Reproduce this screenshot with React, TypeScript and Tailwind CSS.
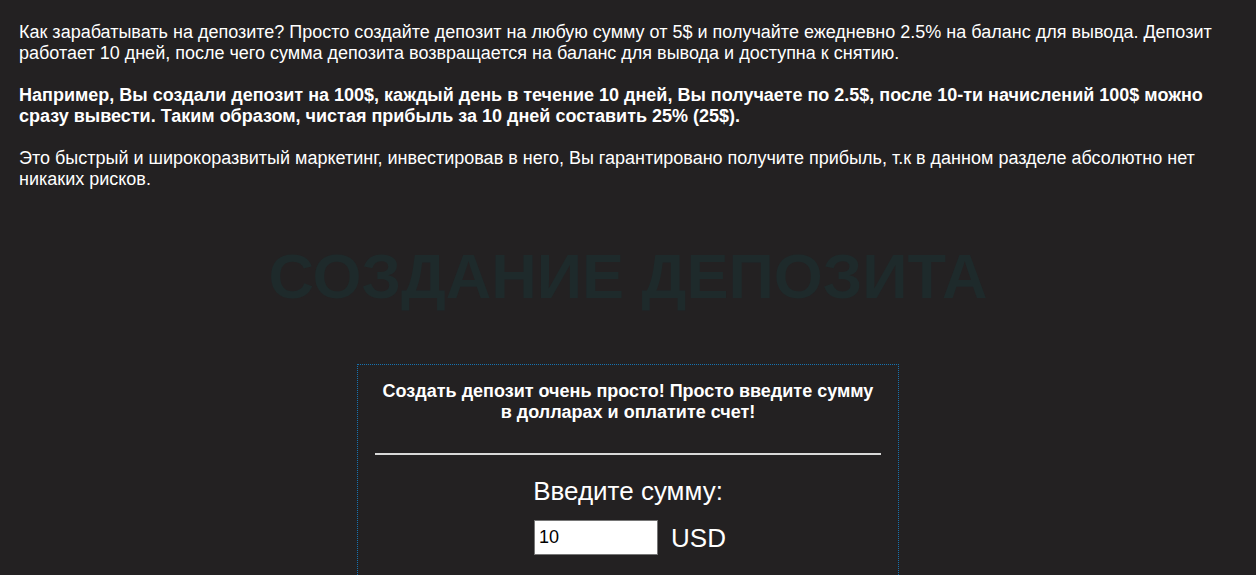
export default function App() {
  return (
    <div className="min-h-[575px] bg-[#232122] text-white font-['Liberation_Sans',Arial,sans-serif]">
      <div className="px-[19px] pt-[22px] text-[18px] leading-[21px]">
        <p>
          Как зарабатывать на депозите? Просто создайте депозит на любую сумму от 5$ и получайте ежедневно 2.5% на баланс для вывода. Депозит работает 10 дней, после чего сумма депозита возвращается на баланс для вывода и доступна к снятию.
        </p>
        <p className="mt-[21px] font-bold">
          Например, Вы создали депозит на 100$, каждый день в течение 10 дней, Вы получаете по 2.5$, после 10-ти начислений 100$ можно сразу вывести. Таким образом, чистая прибыль за 10 дней составить 25% (25$).
        </p>
        <p className="mt-[21px]">
          Это быстрый и широкоразвитый маркетинг, инвестировав в него, Вы гарантировано получите прибыль, т.к в данном разделе абсолютно нет никаких рисков.
        </p>
      </div>

      <h1 className="mt-[50px] text-center text-[63px] leading-[72px] font-bold text-[#1e2a2b]">
        СОЗДАНИЕ ДЕПОЗИТА
      </h1>

      <div className="mt-[52px] flex justify-center">
        <div className="w-[542px] border border-dotted border-[#1672b0] border-b-0 px-[17px] pt-[16px] pb-[20px] text-center">
          <p className="text-[18px] leading-[21px] font-bold">
            Создать депозит очень просто! Просто введите сумму
            <br />
            в долларах и оплатите счет!
          </p>
          <hr className="mt-[30px] border-0 border-t-2 border-[#d8d8d8]" />
          <p className="mt-[21px] text-[26px] leading-[30px]">Введите сумму:</p>
          <div className="mt-[14px] flex items-center justify-center gap-[13px] pl-[4px]">
            <input
              defaultValue="10"
              className="h-[35px] w-[124px] border border-[#767676] bg-white px-[4px] text-[18px] text-black outline-none"
            />
            <span className="text-[26px] leading-[30px]">USD</span>
          </div>
        </div>
      </div>
    </div>
  );
}
